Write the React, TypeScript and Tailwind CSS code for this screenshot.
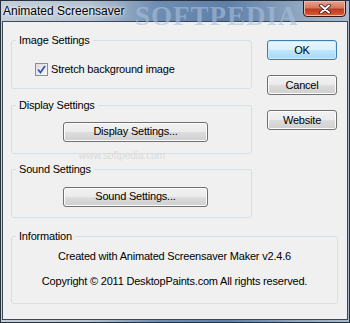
import React from 'react';

const FONT = "font-['Liberation_Sans',Arial,sans-serif]";

function WinButton({ label, primary = false, wide = false }: { label: string; primary?: boolean; wide?: boolean }) {
  return (
    <button
      className={`${wide ? 'w-[145px]' : 'w-[70px]'} h-[20px] rounded-[3px] border text-[11px] leading-none tracking-[-0.2px] text-black ${
        primary
          ? 'border-[#3c7fb1] bg-[linear-gradient(#eaf6fd_0%,#d9f0fc_50%,#bee6fd_51%,#a7d9f5_100%)] shadow-[inset_0_0_0_1px_#c7ecfd]'
          : 'border-[#707070] bg-[linear-gradient(#f2f2f2_0%,#ebebeb_50%,#dddddd_51%,#cfcfcf_100%)] shadow-[inset_0_0_0_1px_#fcfcfc]'
      }`}>
      {label}
    </button>
  );
}

function Group({ title, className = '', children }: { title: string; className?: string; children: React.ReactNode }) {
  return (
    <fieldset className={`rounded-[3px] border border-[#d5dfe5] ${className}`}>
      <legend className="ml-[4px] px-[3px] text-[11px] leading-[13px] tracking-[-0.2px] text-black">{title}</legend>
      {children}
    </fieldset>
  );
}

export default function App() {
  return (
    <div className={`${FONT} w-[350px] h-[323px] flex flex-col border border-[#28323e] bg-[linear-gradient(90deg,#c4ced9_0%,#b5c3d2_25%,#6f8db2_45%,#5d7fa8_65%,#8ea5c0_85%,#a9b9ca_100%)] overflow-hidden`}>
      {/* title bar */}
      <div className="relative h-[20px] flex items-center shrink-0">
        <span className="pl-[2px] text-[12px] text-black [text-shadow:0_0_6px_#ffffff,0_0_3px_#ffffff]">
          Animated Screensaver
        </span>
        <span className="absolute left-[134px] top-[-5px] font-['Liberation_Serif',serif] font-bold text-[27px] tracking-[1px] text-[#a9c0dc] opacity-60">
          SOFTPEDIA
        </span>
        <div className="absolute right-[3px] top-[-1px] w-[43px] h-[17px] rounded-b-[4px] border border-[#3b1410] bg-[linear-gradient(#e6a392_0%,#d5775f_45%,#c0391f_55%,#d4603e_100%)] flex items-center justify-center shadow-[inset_0_0_0_1px_#f1b9a8]">
          <svg width="12" height="10" viewBox="0 0 12 10">
            <path d="M2 1.5 L10 8.5 M10 1.5 L2 8.5" stroke="#3a1510" strokeWidth="3.6" strokeLinecap="round" />
            <path d="M2 1.5 L10 8.5 M10 1.5 L2 8.5" stroke="#ffffff" strokeWidth="2" strokeLinecap="round" />
          </svg>
        </div>
      </div>

      {/* client area */}
      <div className="mx-[1px] mb-[2px] flex-1 border border-[#3d4856] bg-[#f0f0f0] flex flex-col px-[8px] pt-[12px]">
        <div className="flex gap-[15px]">
          <div className="w-[241px] flex flex-col">
            <Group title="Image Settings" className="h-[55px]">
              <label className="mt-[14px] ml-[23px] flex items-center gap-[3px] text-[11px] tracking-[-0.2px] text-black">
                <span className="w-[13px] h-[13px] border border-[#8e8f8f] bg-[linear-gradient(135deg,#dcdcdc,#f8f8f8)] flex items-center justify-center">
                  <svg width="9" height="9" viewBox="0 0 9 9">
                    <path d="M1 4.5 L3.5 7.5 L8 1" stroke="#3a55b8" strokeWidth="1.8" fill="none" />
                  </svg>
                </span>
                Stretch background image
              </label>
            </Group>

            <Group title="Display Settings" className="relative mt-[10px] h-[55px]">
              <span className="absolute left-[67px] top-[38px] text-[10px] leading-[12px] text-[#dadada]">www.softpedia.com</span>
              <div className="mt-[6px] ml-[51px]">
                <WinButton label="Display Settings..." wide />
              </div>
            </Group>

            <Group title="Sound Settings" className="mt-[9px] h-[55px]">
              <div className="mt-[7px] ml-[51px]">
                <WinButton label="Sound Settings..." wide />
              </div>
            </Group>
          </div>

          <div className="mt-[6px] flex flex-col gap-[15px]">
            <WinButton label="OK" primary />
            <WinButton label="Cancel" />
            <WinButton label="Website" />
          </div>
        </div>

        <Group title="Information" className="mt-[12px] h-[74px] w-[327px]">
          <div className="mt-[7px] flex flex-col items-center gap-[12px] text-[11px] leading-[13px] tracking-[-0.2px] text-black">
            <p>Created with Animated Screensaver Maker v2.4.6</p>
            <p>Copyright © 2011 DesktopPaints.com All rights reserved.</p>
          </div>
        </Group>
      </div>
    </div>
  );
}
